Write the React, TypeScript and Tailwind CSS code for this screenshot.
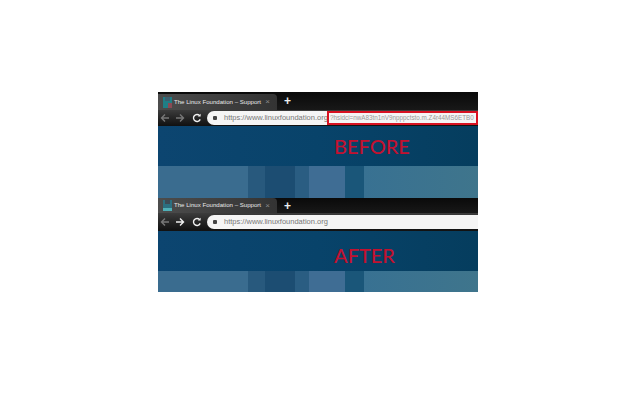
import React from "react";

const sans = "font-['Liberation_Sans',sans-serif]";

function Favicon({ tone }: { tone: "before" | "after" }) {
  return (
    <svg width="9" height="11" viewBox="0 0 9 11" className="shrink-0">
      <rect width="9" height="11" fill={tone === "before" ? "#1f7f86" : "#2c6f80"} />
      <rect x="2" y="0" width="5" height="4" fill={tone === "before" ? "#3c5f70" : "#3d4a55"} />
      {tone === "before" ? <rect x="5" y="6" width="4" height="5" fill="#8a4a55" /> : <rect x="0" y="8" width="9" height="3" fill="#4fb0b8" />}
    </svg>
  );
}

function Arrow({ dir, color }: { dir: "left" | "right"; color: string }) {
  return (
    <svg width="10" height="10" viewBox="0 0 10 10" fill="none" stroke={color} strokeWidth="1.4">
      {dir === "left" ? <path d="M9 5H1.5M5 1.5 1.5 5 5 8.5" /> : <path d="M1 5h7.5M5 1.5 8.5 5 5 8.5" />}
    </svg>
  );
}

function Reload() {
  return (
    <svg width="10" height="10" viewBox="0 0 10 10" fill="none" stroke="#f2f2f2" strokeWidth="1.4" className="ml-[2px]">
      <path d="M8.2 6.4A3.5 3.5 0 1 1 7.6 2.6" />
      <path d="M8.6 0.8v2.8H5.8" fill="#f2f2f2" stroke="none" />
    </svg>
  );
}

function Chrome({ after }: { after?: boolean }) {
  return (
    <>
      <div className={`flex items-end bg-gradient-to-b from-[#0a0a0a] to-[#181818] ${after ? "h-[15px]" : "h-[18px]"}`}>
        <div className={`flex w-[119px] items-center gap-[2px] rounded-tr-[4px] bg-gradient-to-r from-[#4c4c4c] to-[#333333] pl-[5px] pr-[7px] ${after ? "h-[15px]" : "h-[16px]"}`}>
          <Favicon tone={after ? "after" : "before"} />
          <span className={`${sans} flex-1 whitespace-nowrap text-[6.1px] leading-none text-[#e8e8e8]`}>The Linux Foundation – Support</span>
          <span className={`${sans} text-[8px] leading-none text-[#8a8a8a]`}>×</span>
        </div>
        <div className={`${sans} flex h-full items-center pl-[7px] text-[12px] font-bold leading-none text-[#eeeeee]`}>+</div>
      </div>
      <div className={`flex items-center bg-gradient-to-b from-[#3c3c3c] to-[#111111] ${after ? "h-[18px]" : "h-[16px]"}`}>
        <div className="flex w-[49px] items-center gap-[5px] pl-[2px]">
          <Arrow dir="left" color="#777777" />
          <Arrow dir="right" color={after ? "#f0f0f0" : "#777777"} />
          <Reload />
        </div>
        <div className="flex h-[14px] flex-1 items-center overflow-hidden rounded-l-full bg-[#f5f5f5] pl-[6px]">
          <div className="mr-[7px] h-[4px] w-[4px] shrink-0 rounded-[1px] bg-[#444444]" />
          <span className={`${sans} w-[103px] shrink-0 whitespace-nowrap text-[7.5px] leading-none text-[#777777]`}>https://www.linuxfoundation.org</span>
          {!after && (
            <div className="flex h-full flex-1 items-center overflow-hidden border-2 border-[#d81222] pl-[1px]">
              <span className={`${sans} whitespace-nowrap text-[6.3px] leading-none text-[#999999]`}>?hsidci=nwA83tn1nV9npppctsto.m.Z4r44MS6ETB0</span>
            </div>
          )}
        </div>
      </div>
    </>
  );
}

function Hero({ label, after }: { label: string; after?: boolean }) {
  return (
    <div className={`flex h-[40px] items-center bg-gradient-to-r from-[#0c4570] via-[#08436a] to-[#053d5e] pl-[176px] ${after ? "pt-[8px]" : ""}`}>
      <span className="font-['Lato',sans-serif] text-[20px] font-medium leading-none text-[#c3112f]">{label}</span>
    </div>
  );
}

function Band({ height }: { height: string }) {
  return (
    <div className={`flex ${height}`}>
      <div className="w-[90px] bg-[#3a6c8f]" />
      <div className="w-[17px] bg-[#28597d]" />
      <div className="w-[30px] bg-[#1c4d72]" />
      <div className="w-[14px] bg-[#2a5d82]" />
      <div className="w-[36px] bg-[#3f6d94]" />
      <div className="w-[19px] bg-[#1a5679]" />
      <div className="flex-1 bg-gradient-to-r from-[#387192] to-[#3f758c]" />
    </div>
  );
}

export default function App() {
  return (
    <div className="h-[400px] w-[640px] bg-white pl-[158px] pt-[92px]">
      <div className="flex w-[320px] flex-col overflow-hidden">
        <Chrome />
        <Hero label="BEFORE" />
        <Band height="h-[32px]" />
        <Chrome after />
        <Hero label="AFTER" after />
        <Band height="h-[21px]" />
      </div>
    </div>
  );
}
